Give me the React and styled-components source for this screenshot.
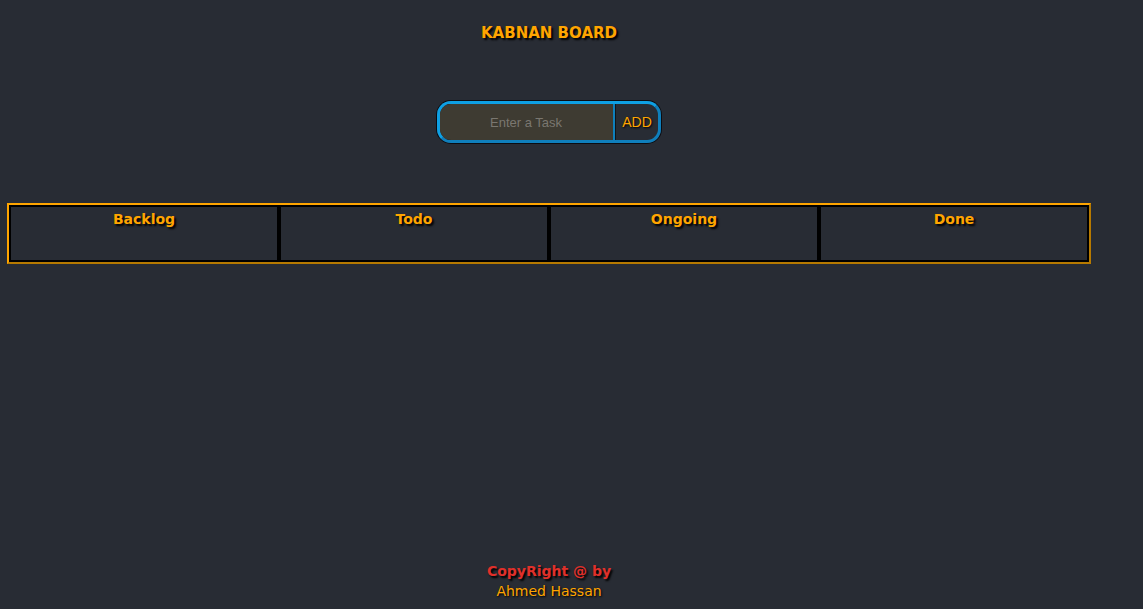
import React from "react";
import styled, { createGlobalStyle } from "styled-components";

const Global = createGlobalStyle`
  html, body { margin: 0; padding: 0; background: #282c34; }
  body { font-family: "DejaVu Sans", Verdana, sans-serif; }
`;

const Page = styled.div`
  min-height: 100vh;
  box-sizing: border-box;
  display: flex;
  flex-direction: column;
  width: 1084px;
  margin-left: 7px;
`;

const Title = styled.h1`
  margin: 25px 0 0;
  text-align: center;
  font-family: "DejaVu Sans", Verdana, sans-serif;
  font-weight: bold;
  font-size: 15px;
  line-height: 17px;
  color: #ffa500;
  text-shadow: 2px 2px 2px #000;
`;

const FormRow = styled.div`
  display: flex;
  justify-content: center;
  margin-top: 59px;
`;

const Form = styled.form`
  display: flex;
  height: 42px;
  box-sizing: border-box;
  border: 3px solid #0ea0e4;
  border-bottom-color: #0f7fbc;
  border-right-color: #0f7fbc;
  border-radius: 14px;
  box-shadow: 0 0 0 1px #0b0d12;
  overflow: hidden;
  margin-left: -1px;
`;

const TaskInput = styled.input`
  width: 175px;
  height: 100%;
  box-sizing: border-box;
  border: none;
  border-right: 2px solid #0f7fbc;
  box-shadow: 1px 0 0 #10141a;
  outline: none;
  background: #3e3b32;
  color: #ddd;
  text-align: center;
  font-family: "Liberation Sans", Arial, sans-serif;
  font-size: 13px;
  &::placeholder { color: #7a7770; }
`;

const AddButton = styled.button`
  width: 43px;
  background: transparent;
  border: none;
  padding: 0 0 0 2px;
  color: #ffa500;
  font-family: "Liberation Sans", Arial, sans-serif;
  font-size: 14px;
  text-shadow: 1px 1px 2px #000;
  cursor: pointer;
`;

const Board = styled.div`
  margin-top: 60px;
  display: grid;
  grid-template-columns: repeat(4, 1fr);
  border: 2px solid;
  border-color: #ffa500 #b77a00 #b77a00 #ffa500;
`;

const Column = styled.div`
  border: 2px solid #000;
  box-sizing: border-box;
  height: 57px;
`;

const ColumnTitle = styled.h2`
  margin: 3px 0 0;
  text-align: center;
  font-family: "DejaVu Sans", Verdana, sans-serif;
  font-weight: bold;
  font-size: 14px;
  line-height: 18px;
  color: #ffa500;
  text-shadow: 2px 2px 2px #000;
`;

const Footer = styled.footer`
  margin-top: auto;
  padding-bottom: 7px;
  text-align: center;
`;

const Copy = styled.div`
  font-weight: bold;
  font-size: 14px;
  line-height: 20px;
  color: #e0302a;
  text-shadow: 2px 2px 2px #000;
`;

const Author = styled.div`
  font-size: 14px;
  line-height: 21px;
  color: #ffa500;
  text-shadow: 1px 1px 2px #000;
`;

const columns = ["Backlog", "Todo", "Ongoing", "Done"];

export default function App() {
  return (
    <>
      <Global />
      <Page>
        <Title>KABNAN BOARD</Title>
        <FormRow>
          <Form onSubmit={(e) => e.preventDefault()}>
            <TaskInput placeholder="Enter a Task" />
            <AddButton type="submit">ADD</AddButton>
          </Form>
        </FormRow>
        <Board>
          {columns.map((c) => (
            <Column key={c}>
              <ColumnTitle>{c}</ColumnTitle>
            </Column>
          ))}
        </Board>
        <Footer>
          <Copy>CopyRight @ by</Copy>
          <Author>Ahmed Hassan</Author>
        </Footer>
      </Page>
    </>
  );
}
